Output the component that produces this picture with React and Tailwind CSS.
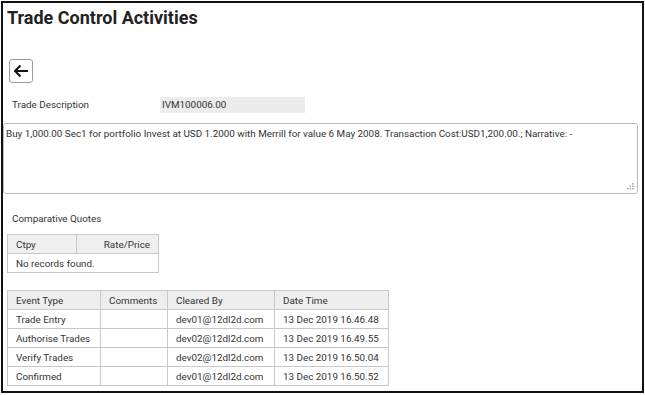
import React from 'react';

const events = [
  { type: 'Trade Entry', comments: '', by: 'dev01@12dl2d.com', at: '13 Dec 2019 16.46.48' },
  { type: 'Authorise Trades', comments: '', by: 'dev02@12dl2d.com', at: '13 Dec 2019 16.49.55' },
  { type: 'Verify Trades', comments: '', by: 'dev02@12dl2d.com', at: '13 Dec 2019 16.50.04' },
  { type: 'Confirmed', comments: '', by: 'dev01@12dl2d.com', at: '13 Dec 2019 16.50.52' },
];

const cell = 'border border-[#c8c8c8] px-[8px] h-[19px] leading-[17px] whitespace-nowrap overflow-hidden';

export default function App() {
  return (
    <div className="w-[645px] h-[395px] bg-white pt-px pl-px font-['Roboto',sans-serif] text-[9.85px] text-[#333]">
      <div className="w-[643px] h-[392px] border-2 border-[#111] flex flex-col">
        <h1 className="pl-[4px] pt-[4px] text-[18px] leading-[22px] font-bold text-[#222]">Trade Control Activities</h1>

        <button className="ml-[6px] mt-[30px] w-[24px] h-[24px] border border-[#999] rounded-[3px] flex items-center justify-center bg-white">
          <svg width="16" height="14" viewBox="0 0 16 14" fill="none" stroke="#111" strokeWidth="2">
            <path d="M15 7H2" />
            <path d="M7.5 1.5 2 7l5.5 5.5" />
          </svg>
        </button>

        <div className="flex items-center mt-[14px] h-[16px]">
          <span className="pl-[9px] w-[157px]">Trade Description</span>
          <div className="w-[145px] h-[16px] bg-[#ececec] pl-[2px] leading-[16px]">IVM100006.00</div>
        </div>

        <div className="relative mt-[10px] w-[635px] h-[71px] border border-[#bbb] rounded-[3px] px-[2px] pt-[3px]">
          <p className="whitespace-nowrap">
            Buy 1,000.00 Sec1 for portfolio Invest at USD 1.2000 with Merrill for value 6 May 2008. Transaction Cost:USD1,200.00.; Narrative: -
          </p>
          <svg className="absolute right-[3px] bottom-[3px]" width="7" height="7" viewBox="0 0 7 7" fill="#aaa">
            <rect x="5" y="0" width="1.5" height="1.5" />
            <rect x="2.5" y="2.5" width="1.5" height="1.5" />
            <rect x="5" y="2.5" width="1.5" height="1.5" />
            <rect x="0" y="5" width="1.5" height="1.5" />
            <rect x="2.5" y="5" width="1.5" height="1.5" />
            <rect x="5" y="5" width="1.5" height="1.5" />
          </svg>
        </div>

        <div className="pl-[9px] mt-[19px] leading-[12px]">Comparative Quotes</div>

        <table className="ml-[4px] mt-[9px] border-collapse table-fixed w-[152px]">
          <thead>
            <tr className="bg-[#f0f0f0]">
              <th className={`${cell} font-normal text-left w-[69px]`}>Ctpy</th>
              <th className={`${cell} font-normal text-right`}>Rate/Price</th>
            </tr>
          </thead>
          <tbody>
            <tr>
              <td colSpan={2} className={`${cell} px-[8px]`}>No records found.</td>
            </tr>
          </tbody>
        </table>

        <table className="ml-[4px] mt-[17px] border-collapse table-fixed w-[382px]">
          <thead>
            <tr className="bg-[#eeeeee]">
              <th className={`${cell} font-normal text-left w-[93px]`}>Event Type</th>
              <th className={`${cell} font-normal text-left w-[67px]`}>Comments</th>
              <th className={`${cell} font-normal text-left w-[107px]`}>Cleared By</th>
              <th className={`${cell} font-normal text-left`}>Date Time</th>
            </tr>
          </thead>
          <tbody>
            {events.map((e) => (
              <tr key={e.at}>
                <td className={cell}>{e.type}</td>
                <td className={cell}>{e.comments}</td>
                <td className={cell}>{e.by}</td>
                <td className={cell}>{e.at}</td>
              </tr>
            ))}
          </tbody>
        </table>
      </div>
    </div>
  );
}
